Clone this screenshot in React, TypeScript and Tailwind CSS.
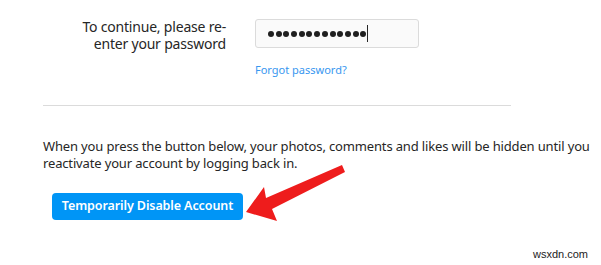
export default function App() {
  return (
    <div className="relative w-[601px] h-[265px] bg-white overflow-hidden text-[#262626]" style={{ fontFamily: '"Noto Sans", "Open Sans", sans-serif' }}>
      <div className="pl-[43px] pt-[19px]">
        <div className="flex">
          <div className="w-[183px] -mt-[1px] text-right text-[14px] leading-[17px] tracking-[-0.2px]">
            To continue, please re-<br />enter your password
          </div>
          <div className="ml-[29px]">
            <div className="w-[164px] h-[29px] border border-[#dbdbdb] rounded-[3px] bg-[#fafafa] flex items-center pl-[12px]">
              <div className="flex gap-[1.7px]">
                {Array.from({ length: 13 }).map((_, i) => (
                  <span key={i} className="w-[6px] h-[6px] rounded-full bg-[#1f1f1f]" />
                ))}
              </div>
              <span className="w-px h-[17px] bg-[#262626] ml-[1px]" />
            </div>
            <div className="mt-[14px] text-[11px] text-[#3897f0]">Forgot password?</div>
          </div>
        </div>
        <div className="mt-[26px] w-[468px] h-px bg-[#dbdbdb]" />
        <p className="mt-[32px] text-[13px] leading-[17px] tracking-[-0.15px] w-[556px]">
          When you press the button below, your photos, comments and likes will be hidden until you reactivate your account by logging back in.
        </p>
        <button className="mt-[21px] ml-[9px] w-[191px] h-[27px] rounded-[4px] bg-[#0095f6] text-white text-[12.5px] tracking-[-0.1px] font-semibold">
          Temporarily Disable Account
        </button>
      </div>
      <svg className="absolute left-0 top-0" width="601" height="265" viewBox="0 0 601 265">
        <path d="M246 212 L264 187 L266 198 L342 165 L345 172 L272 209 L277 221 Z" fill="#ee1c1c" />
      </svg>
      <div className="absolute right-[13px] bottom-[3px] text-[11px] text-[#222]" style={{ fontFamily: '"Liberation Sans", sans-serif' }}>
        wsxdn.com
      </div>
    </div>
  )
}
